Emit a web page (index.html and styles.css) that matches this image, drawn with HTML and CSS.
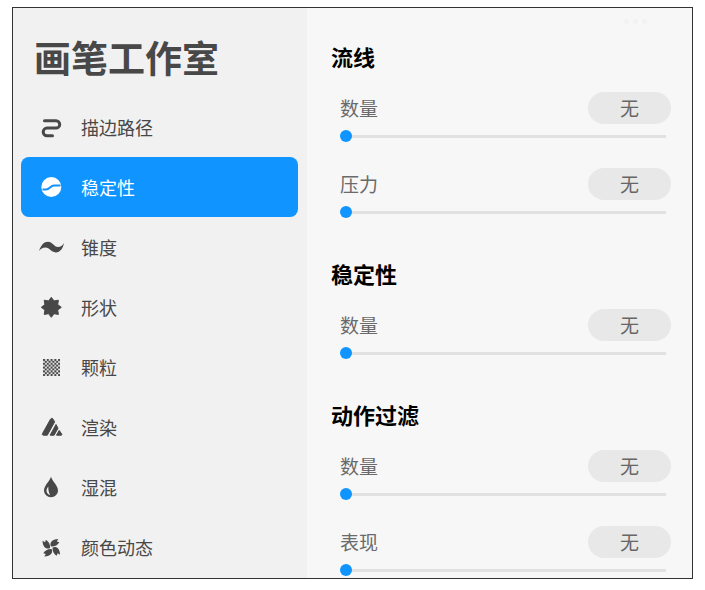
FILE: index.html
```html
<!DOCTYPE html>
<html lang="zh-CN">
<head>
<meta charset="utf-8">
<meta name="viewport" content="width=device-width, initial-scale=1">
<title>画笔工作室</title>
<link rel="stylesheet" href="styles.css">
</head>
<body>
<div class="studio">
  <aside class="sidebar">
    <h1 class="title">画笔工作室</h1>
    <nav class="menu">
      <a class="item" href="#stroke">
        <svg class="icon" viewBox="0 0 26 26" aria-hidden="true"><path d="M6.500 6.700H18a3.700 3.700 0 0 1 0 7.400H9a3.700 3.700 0 0 0 0 7.600H14.500" fill="none" stroke="currentColor" stroke-width="3" stroke-linecap="round"/></svg>
        描边路径</a>
      <a class="item active" href="#stability" aria-current="page">
        <svg class="icon" viewBox="0 0 26 26" aria-hidden="true"><circle cx="13.3" cy="13" r="10" fill="currentColor"/><path d="M4.500 15.600h3.500c3.500 0 4.500-4.200 8-4.200H22.500" class="cut"/></svg>
        稳定性</a>
      <a class="item" href="#taper">
        <svg class="icon" viewBox="0 0 26 26" aria-hidden="true"><path d="M1 17C3 11 6 7.800 10 7.800c4.500 0 6 5.200 10 5.200 2.700 0 4.500-1.600 6-4-1 5.500-3.800 9.400-8.200 9.400-5 0-6-4.800-10.300-4.800-2.700 0-5 1.200-6.500 3.400z" fill="currentColor"/></svg>
        锥度</a>
      <a class="item" href="#shape">
        <svg class="icon" viewBox="0 0 26 26" aria-hidden="true"><path transform="translate(13.3 13.3)" d="M10 0L6.400 2.700 7.100 7.100 2.700 6.400 0 10-2.700 6.400-7.100 7.100-6.400 2.700-10 0-6.400-2.700-7.100-7.100-2.700-6.400 0-10 2.700-6.400 7.100-7.100 6.400-2.700z" fill="currentColor" stroke="currentColor" stroke-linejoin="round"/></svg>
        形状</a>
      <a class="item" href="#grain">
        <svg class="icon" viewBox="0 0 26 26" aria-hidden="true"><defs><pattern id="checks" x="5" y="5" width="3.78" height="3.78" patternUnits="userSpaceOnUse"><path d="M0 0h2.100v2.100H0zM1.800 1.800h2v2h-2z" fill="currentColor"/></pattern></defs><path d="M5 5h17v17H5z" fill="url(#checks)"/></svg>
        颗粒</a>
      <a class="item" href="#render">
        <svg class="icon" viewBox="0 0 26 26" aria-hidden="true"><g transform="translate(1 .7)" fill="currentColor" stroke="currentColor" stroke-linejoin="round"><path d="M11.500 4.500c.7-1.200 2-1.200 2.600 0l1.500 2.700L8.300 20.500H4.300c-.9 0-1.200-.8-.8-1.600z"/><path d="M17 9.800l2 3.700-3.900 7h-4z"/><path d="M20.200 15.700l2.500 3.700c.4.600.1 1.100-.6 1.100h-4.600z"/></g></svg>
        渲染</a>
      <a class="item" href="#wet">
        <svg class="icon" viewBox="0 0 26 26" aria-hidden="true"><path d="M13 2.700C11.500 7.500 6 11.500 6 16.700a7 6.600 0 0 0 14 0C20 11.500 14.500 7.500 13 2.700z" fill="currentColor"/><path d="M10.300 12.500c-2.600 3-2.600 7 1.900 8.700-1.500-2.500-1.900-5.200-1.900-8.700z" class="shine"/></svg>
        湿混</a>
      <a class="item" href="#color">
        <svg class="icon" viewBox="0 0 26 26" aria-hidden="true"><defs><path id="blade" d="M-.3-1.200C-2-5 .5-8.500 7-8.800L5.500-6.200 8-5.500C6.500-2.700 3.500-1-.3-1.200z"/></defs><g transform="translate(13.300 13.800)" fill="currentColor"><use href="#blade"/><use href="#blade" transform="rotate(90)"/><use href="#blade" transform="rotate(180)"/><use href="#blade" transform="rotate(270)"/></g></svg>
        颜色动态</a>
    </nav>
  </aside>
  <main class="panel">
    <button class="more" type="button" aria-label="更多"><i></i><i></i><i></i></button>
    <section>
      <h2 class="heading">流线</h2>
      <div class="setting">
        <div class="row"><label for="s1">数量</label><button class="value" type="button">无</button></div>
        <input class="slider" id="s1" type="range" min="0" max="100" value="0">
      </div>
      <div class="setting">
        <div class="row"><label for="s2">压力</label><button class="value" type="button">无</button></div>
        <input class="slider" id="s2" type="range" min="0" max="100" value="0">
      </div>
    </section>
    <section>
      <h2 class="heading">稳定性</h2>
      <div class="setting">
        <div class="row"><label for="s3">数量</label><button class="value" type="button">无</button></div>
        <input class="slider" id="s3" type="range" min="0" max="100" value="0">
      </div>
    </section>
    <section>
      <h2 class="heading">动作过滤</h2>
      <div class="setting">
        <div class="row"><label for="s4">数量</label><button class="value" type="button">无</button></div>
        <input class="slider" id="s4" type="range" min="0" max="100" value="0">
      </div>
      <div class="setting">
        <div class="row"><label for="s5">表现</label><button class="value" type="button">无</button></div>
        <input class="slider" id="s5" type="range" min="0" max="100" value="0">
      </div>
    </section>
  </main>
</div>
</body>
</html>
```
FILE: styles.css
```css
* {
  box-sizing: border-box;
}

body {
  margin: 0;
  height: 100vh;
  padding: 7px 12px 11px;
  background: #fff;
  font-family: "Noto Sans CJK SC", sans-serif;
}

.studio {
  display: grid;
  grid-template-columns: 294px 1fr;
  height: 100%;
  overflow: hidden;
  border: 1px solid #333;
  background: #f7f7f7;
}

.sidebar {
  min-height: 0;
  padding: 22px 8px 0;
  background: #f1f1f1;
}

.title {
  margin: 0 0 12px;
  padding-left: 13px;
  font-size: 37px;
  line-height: 55px;
  font-weight: 700;
  color: #484848;
}

.item {
  display: flex;
  align-items: center;
  gap: 17px;
  height: 60px;
  margin-right: 1px;
  padding-left: 17px;
  border-radius: 8px;
  font-size: 18px;
  line-height: 28px;
  color: #484848;
  text-decoration: none;
}

.item.active {
  background: #1094ff;
  color: #fff;
}

.icon {
  flex: none;
  width: 26px;
  height: 26px;
}

.cut {
  fill: none;
  stroke: #1094ff;
  stroke-width: 2;
}

.shine {
  fill: #f1f1f1;
}

.panel {
  position: relative;
  min-height: 0;
  padding: 19px 21px 0 24px;
}

.more {
  position: absolute;
  top: 8px;
  right: 42px;
  display: flex;
  gap: 4px;
  padding: 3px;
  border: 0;
  background: none;
}

.more i {
  width: 5px;
  height: 5px;
  border-radius: 50%;
  background: #f2f2f2;
}

.heading {
  margin: 0;
  padding: 13px 0 20px;
  font-size: 22px;
  line-height: 32px;
  font-weight: 700;
  color: #000;
}

.setting {
  height: 76px;
  padding-left: 9px;
}

.row {
  display: flex;
  align-items: center;
  justify-content: space-between;
  height: 32px;
  font-size: 19px;
  line-height: 30px;
  color: #6a6a6a;
}

.value {
  width: 83px;
  height: 32px;
  padding: 0;
  border: 0;
  border-radius: 16px;
  background: #e8e8e8;
  color: #666;
  font: inherit;
}

.slider {
  display: block;
  width: calc(100% - 5px);
  height: 24px;
  margin: 0;
  appearance: none;
  background: linear-gradient(#e1e1e1, #e1e1e1) right center / calc(100% - 10px) 3px no-repeat;
}

.slider::-webkit-slider-thumb {
  appearance: none;
  width: 12px;
  height: 12px;
  border-radius: 50%;
  background: #1094ff;
}
```
